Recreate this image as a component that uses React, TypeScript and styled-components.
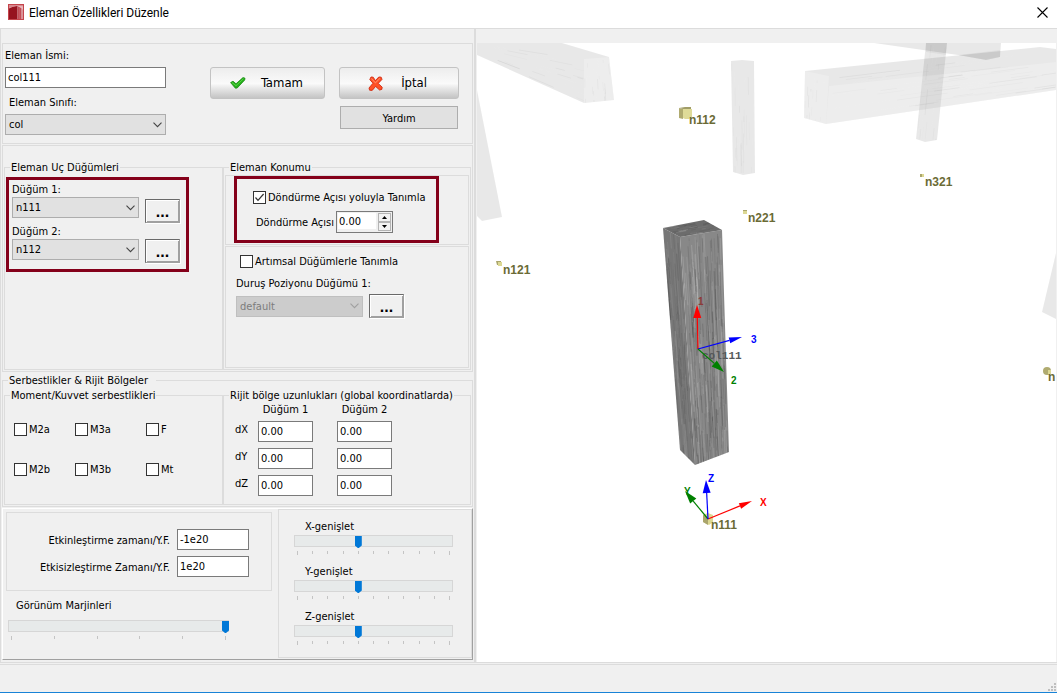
import React, { useId, useState } from "react";
import styled, { createGlobalStyle, css } from "styled-components";

const line = "#dcdcdc";
const face = "#f0f0f0";
const uiFont = '"DejaVu Sans Condensed", "DejaVu Sans", sans-serif';

const GlobalStyle = createGlobalStyle`
  *, *::before, *::after { box-sizing: border-box; }
  body { margin: 0; background: ${face}; }
  body, button, input, select { font: 11px/14px ${uiFont}; color: #000; }
  label, legend { padding-top: 2px; line-height: 12px; }
`;

/* ---------- window frame ---------- */

const Window = styled.div`
  min-height: 100vh;
  display: flex;
  flex-direction: column;
  background: ${face};
`;

const TitleBar = styled.header`
  display: flex;
  align-items: center;
  gap: 5px;
  height: 29px;
  padding: 0 9px 4px 8px;
  background: #fff;
  border-bottom: 1px solid ${line};
`;

const Title = styled.h1`
  flex: 1;
  margin: 0;
  padding-top: 2px;
  font: 400 12px/16px Roboto, sans-serif;
`;

const CloseButton = styled.button`
  display: flex;
  padding: 0;
  border: 0;
  background: none;
`;

const Body = styled.div`
  flex: 1;
  display: flex;
`;

const SidePanel = styled.form`
  flex: none;
  width: 476px;
  display: flex;
  flex-direction: column;
  gap: 1px;
  padding: 14px 1px 0;
  border-left: 1px solid ${line};
  border-right: 2px solid ${line};
`;

const StatusBar = styled.footer`
  display: flex;
  justify-content: flex-end;
  align-items: flex-end;
  height: 31px;
  padding: 0 1px 1px 0;
  border-top: 3px double ${line};
  border-bottom: 1px solid #1883d7;
`;

/* ---------- panels and groups ---------- */

const Panel = styled.section`
  border: 1px solid ${line};
`;

const Group = styled.fieldset`
  min-width: 0;
  margin: 0;
  padding: 0;
  border: 1px solid ${line};
`;

const GroupTitle = styled.legend<{ $wide?: boolean }>`
  margin-left: 5px;
  padding-left: 1px;
  padding-right: ${(p) => (p.$wide ? 8 : 1)}px;
  white-space: nowrap;
`;

const IdentityPanel = styled(Panel)`
  display: flex;
  gap: 44px;
  padding: 4px 2px 8px;
`;

const FieldStack = styled.div`
  width: 161px;
  display: flex;
  flex-direction: column;
`;

const FieldLabel = styled.label<{ $indent?: boolean; $spaced?: boolean }>`
  margin: ${(p) => (p.$spaced ? 7 : 0)}px 0 5px ${(p) => (p.$indent ? 4 : 0)}px;
`;

const Actions = styled.div`
  display: grid;
  grid-template-columns: 115px 120px;
  align-content: start;
  gap: 7px 14px;
  padding-top: 19px;
`;

const GlossButton = styled.button`
  height: 32px;
  display: flex;
  align-items: center;
  padding: 0 21px 0 19px;
  border: 1px solid #c3c3c3;
  border-radius: 3px;
  background: linear-gradient(#ededed 0%, #fafafa 52%, #f0f0f0 60%, #c4c4c4 100%);
  font-size: 13px;
`;

const ButtonText = styled.span`
  flex: 1;
  text-align: right;
`;

const CancelButton = styled(GlossButton)`
  padding: 0 31px 0 28px;
`;

const PlainButton = styled.button`
  grid-column: 2;
  height: 23px;
  margin: 0 1px;
  padding: 2px 0 0;
  border: 1px solid #adadad;
  background: #e1e1e1;
`;

const NodesPanel = styled(Panel)`
  display: grid;
  grid-template-columns: 219px 1fr;
  padding: 14px 1px 1px;
`;

const Highlight = styled.div`
  border: 3px solid #84001a;
`;

const NodeHighlight = styled(Highlight)`
  display: flex;
  gap: 6px;
  width: 183px;
  margin: 3px 0 0 1px;
  padding: 2px 6px 6px 3px;
`;

const NodeFields = styled.div`
  width: 127px;
  display: flex;
  flex-direction: column;
  gap: 1px;

  label + div + label {
    margin-top: 5px;
  }
`;

const BrowseColumn = styled.div`
  display: flex;
  flex-direction: column;
  gap: 16px;
  padding-top: 17px;
`;

const BrowseButton = styled.button`
  width: 35px;
  height: 24px;
  padding: 0;
  border: 1px solid;
  border-color: #696969 #a0a0a0 #a0a0a0 #696969;
  background: ${face};
  box-shadow: inset 1px 1px #fff, inset -1px -1px #a0a0a0, 1px 1px #fff;
  font: 700 16px/24px "Liberation Sans", sans-serif;
`;

const RotationPanel = styled(Panel)`
  margin: 1px;
  padding: 0 0 1px 8px;
`;

const RotationHighlight = styled(Highlight)`
  width: 205px;
  display: flex;
  flex-direction: column;
  gap: 7px;
  padding: 11px 0 7px 16px;
`;

const RotationRow = styled.div`
  display: flex;
  align-items: center;
  justify-content: space-between;
  padding: 0 43px 0 3px;
`;

const IncrementPanel = styled(Panel)`
  margin: 0 1px 1px;
  padding: 7px 0 49px 10px;
`;

const IncrementCheck = styled.div`
  padding-left: 4px;
  margin-bottom: 8px;
`;

const PositionLabel = styled.label`
  display: block;
`;

const PositionRow = styled.div`
  display: grid;
  grid-template-columns: 127px 35px;
  align-items: center;
  gap: 6px;
  margin-top: 4px;
`;

const ReleasesBody = styled.div`
  display: grid;
  grid-template-columns: 219px 1fr;
  padding: 1px;
`;

const CheckGrid = styled.div`
  display: grid;
  grid-template-columns: 61px 71px 1fr;
  row-gap: 26px;
  padding: 20px 0 28px 9px;
`;

const OffsetTable = styled.table`
  margin-left: 11px;
  border-collapse: collapse;

  th { padding: 0; font-weight: 400; }
  thead th { height: 19px; padding-top: 1px; vertical-align: top; }
  tbody th { width: 23px; height: 27px; padding-top: 2px; text-align: left; vertical-align: top; }
  td { width: 79px; padding: 0; vertical-align: top; }
  thead th:nth-child(n + 2) { padding-right: 24px; }
  td input { width: 55px; display: block; }
`;

const BottomPanel = styled.section`
  display: grid;
  grid-template-columns: 275px 1fr;
  border: 1px solid;
  border-color: #fff #a0a0a0 #a0a0a0 #fff;
`;

const TimePanel = styled(Panel)`
  display: grid;
  grid-template-columns: 163px 72px;
  align-items: center;
  gap: 6px 7px;
  margin: 3px 6px 0 3px;
  padding: 16px 0 13px;

  label { text-align: right; }
`;

const MarginBlock = styled.div`
  width: 221px;
  margin: 7px 0 0 5px;
`;

const ScalePanel = styled(Panel)`
  display: flex;
  flex-direction: column;
  gap: 9px;
  margin-bottom: 1px;
  padding: 9px 18px 12px 15px;
`;

/* ---------- controls ---------- */

const TextInput = styled.input`
  width: 100%;
  height: 21px;
  padding: 0 2px;
  border: 1px solid #7a7a7a;
  border-radius: 0;
  background: #fff;
  outline: 0;
`;

const Stacked = styled.div`
  display: grid;
  align-items: center;

  > * { grid-area: 1 / 1; }
  > svg { justify-self: end; margin-right: 4px; pointer-events: none; }
`;

const NativeSelect = styled.select`
  appearance: none;
  width: 100%;
  height: 21px;
  padding: 1px 20px 0 3px;
  border: 1px solid #adadad;
  border-radius: 0;
  background: #e1e1e1;

  &:disabled { border-color: #bfbfbf; background: #ccc; color: #7c7c7c; opacity: 1; }
`;

const CheckLabel = styled.label`
  display: flex;
  align-items: center;
  gap: 2px;
  width: fit-content;
  height: 14px;
  padding: 0;
  white-space: nowrap;
`;

const CheckText = styled.span`
  padding-top: 2px;
`;

const CheckBox = styled.span`
  display: grid;
  width: 13px;
  height: 13px;

  > * { grid-area: 1 / 1; }
  input { appearance: none; width: 13px; height: 13px; margin: 0; border: 1px solid #333; background: #fff; }
  svg { visibility: hidden; pointer-events: none; z-index: 1; }
  input:checked + svg { visibility: visible; }
`;

const Spinner = styled.div`
  display: flex;
  width: 57px;
  height: 22px;
  padding: 1px;
  border: 1px solid #7a7a7a;
  background: ${face};

  input { flex: 1; min-width: 0; height: 16px; padding: 0 1px; border: 0; background: #fff; outline: 0; }
`;

const SpinButtons = styled.div`
  display: grid;
  grid-template-rows: 1fr 1fr;
  width: 13px;
  margin-left: 2px;

  button { display: grid; place-items: center; min-height: 0; padding: 0; border: 1px solid #b4b4b4; background: #f2f2f2; }
`;

const thumb = css`
  appearance: none;
  width: 7px;
  height: 12px;
  margin-top: 2px;
  border: 0;
  border-radius: 0;
  background: #0078d7;
  clip-path: polygon(0 0, 100% 0, 100% 80%, 57% 100%, 43% 100%, 0 80%);
`;

const Range = styled.input`
  appearance: none;
  display: block;
  width: 100%;
  height: 12px;
  margin: 0;
  background: #e7eaea;
  box-shadow: inset 0 0 0 1px #d6d6d6;

  &::-webkit-slider-thumb { ${thumb} }
  &::-moz-range-thumb { ${thumb} }
`;

const Ticks = styled.div`
  display: flex;
  justify-content: space-between;
  height: 4px;
  margin-top: 4px;
  padding: 0 3px;

  i { width: 1px; height: 3px; background: #c4c4c4; }
  i:first-child, i:last-child { height: 4px; }
`;

const SliderLabel = styled.label<{ $gap: number; $indent: number }>`
  display: block;
  margin: 0 0 ${(p) => p.$gap}px ${(p) => p.$indent}px;
`;

function Select({ id, value, disabled }: { id: string; value: string; disabled?: boolean }) {
  return (
    <Stacked>
      <NativeSelect id={id} disabled={disabled} defaultValue={value}>
        <option>{value}</option>
      </NativeSelect>
      <svg width="9" height="6" viewBox="0 0 9 6">
        <path d="M.5 .7 4.5 4.7 8.5 .7" fill="none" stroke={disabled ? "#a0a0a0" : "#444"} strokeWidth="1.1" />
      </svg>
    </Stacked>
  );
}

function Check({ label, checked }: { label: string; checked?: boolean }) {
  return (
    <CheckLabel>
      <CheckBox>
        <input type="checkbox" defaultChecked={checked} />
        <svg width="13" height="13" viewBox="0 0 13 13">
          <path d="M2.5 6.5 5 9.3 10.6 3" fill="none" stroke="#333" strokeWidth="1.2" />
        </svg>
      </CheckBox>
      <CheckText>{label}</CheckText>
    </CheckLabel>
  );
}

interface SliderProps {
  label: string;
  steps: number;
  value: number;
  gap: number;
  indent: number;
}

function Slider({ label, steps, value, gap, indent }: SliderProps) {
  const id = useId();
  return (
    <div>
      <SliderLabel htmlFor={id} $gap={gap} $indent={indent}>{label}</SliderLabel>
      <Range id={id} type="range" min={0} max={steps} defaultValue={value} />
      <Ticks>
        {Array.from({ length: steps + 1 }, (_, i) => <i key={i} />)}
      </Ticks>
    </div>
  );
}

function AngleSpinner({ id }: { id: string }) {
  const [angle, setAngle] = useState(0);
  return (
    <Spinner>
      <input id={id} type="text" value={angle.toFixed(2)} onChange={(e) => setAngle(Number(e.target.value) || 0)} />
      <SpinButtons>
        <button type="button" aria-label="+" onClick={() => setAngle(angle + 1)}>
          <svg width="5" height="3" viewBox="0 0 5 3"><path d="M0 3h5L2.500 0z" /></svg>
        </button>
        <button type="button" aria-label="-" onClick={() => setAngle(angle - 1)}>
          <svg width="5" height="3" viewBox="0 0 5 3"><path d="M0 0h5L2.500 3z" /></svg>
        </button>
      </SpinButtons>
    </Spinner>
  );
}

/* ---------- 3D model view ---------- */

const ViewPane = styled.main`
  flex: 1;
  min-width: 0;
  display: flex;
  padding: 14px 1px 0;
`;

const Scene = styled.svg`
  flex: 1;
  min-width: 0;
  min-height: 618px;
  background: #fff;

  text { font: 700 12px "Liberation Sans", sans-serif; fill: #6b6b35; }
  .axis { font-size: 10px; }
  .member { font: 700 11px "Liberation Mono", monospace; fill: #55585a; }
  .axis-x { fill: #f00; }
  .axis-y { fill: #008000; }
  .axis-z { fill: #00f; }
  .behind { fill: #8b3a3a; }
`;

type Point = [number, number];
type Quad = [Point, Point, Point, Point];

const mix = (a: Point, b: Point, t: number): Point => [a[0] + (b[0] - a[0]) * t, a[1] + (b[1] - a[1]) * t];

/** Wood streaks that run from edge q0-q1 to edge q3-q2 of a face. */
function Grain({ quad, count, seed, strength }: { quad: Quad; count: number; seed: number; strength: number }) {
  let s = seed;
  const next = () => {
    s = (s * 16807) % 2147483647;
    return s / 2147483647;
  };
  const streaks = Array.from({ length: count }, (_, i) => {
    const u = 0.03 + next() * 0.94;
    const from = next();
    const to = Math.min(1, from + 0.05 + next() * 0.22);
    const start = mix(quad[0], quad[1], u);
    const end = mix(quad[3], quad[2], u);
    const [x1, y1] = mix(start, end, from);
    const [x2, y2] = mix(start, end, to);
    const dark = next() > 0.45;
    return (
      <line key={i} x1={x1} y1={y1} x2={x2} y2={y2} stroke={dark ? "#000" : "#fff"} strokeOpacity={(0.3 + next() * 0.7) * strength} />
    );
  });
  return <g>{streaks}</g>;
}

const points = (list: Point[]) => list.map((p) => p.join(",")).join(" ");

const columnLeft: Quad = [[663, 228], [680, 237], [695, 465], [680, 450]];
const columnFront: Quad = [[680, 237], [722, 230], [729, 452], [695, 465]];
const columnTop: Quad = [[663, 228], [704, 220], [722, 230], [680, 237]];

function Arrow({ from, to, color, width = 4 }: { from: Point; to: Point; color: string; width?: number }) {
  const length = Math.hypot(to[0] - from[0], to[1] - from[1]);
  const ux = (to[0] - from[0]) / length;
  const uy = (to[1] - from[1]) / length;
  const base: Point = [to[0] - ux * 13, to[1] - uy * 13];
  const head: Point[] = [to, [base[0] - uy * width, base[1] + ux * width], [base[0] + uy * width, base[1] - ux * width]];
  return (
    <g fill={color} stroke={color}>
      <line x1={from[0]} y1={from[1]} x2={base[0]} y2={base[1]} strokeWidth="1.2" />
      <polygon points={points(head)} stroke="none" />
    </g>
  );
}

function ModelScene() {
  return (
    <Scene viewBox="477 43 579 619" preserveAspectRatio="xMidYMid slice" role="img" aria-label="Model">
      <g fill="#000" fillOpacity=".09">
        <polygon points="477,43 562,43 609,57 614,100 584,103 477,55" />
        <polygon points="477,90 502,217 482,221 477,216" />
        <polygon points="731,61 742,60 754,61 755,173 743,175 733,172" />
        <polygon points="805,71 1040,47 1056,49 1056,90 826,124 804,118" />
        <polygon points="926,43 947,43 937,140 925,142 916,139" />
        <polygon points="874,43 1001,43 1000,57 986,60 958,55" />
        <polygon points="1056,253 1042,312 1056,319" />
      </g>
      <g fill="#fff" fillOpacity=".22">
        <polygon points="584,59 609,57 614,100 584,103" />
        <polygon points="805,71 829,76 826,124 804,118" />
        <polygon points="829,86 1056,62 1056,90 826,124" />
      </g>
      <path d="M926 43h21l-1 12-20-3zM958 55l42-5v7l-14 3z" fillOpacity=".04" />
      <Grain quad={[[477, 43], [477, 55], [584, 103], [584, 59]]} count={34} seed={41} strength={0.04} />
      <Grain quad={[[584, 59], [609, 57], [614, 100], [584, 103]]} count={26} seed={87} strength={0.04} />
      <Grain quad={[[829, 76], [826, 124], [1056, 90], [1056, 49]]} count={70} seed={53} strength={0.04} />
      <Grain quad={[[805, 71], [829, 76], [826, 124], [804, 118]]} count={20} seed={29} strength={0.04} />
      <Grain quad={[[731, 61], [754, 61], [755, 173], [733, 173]]} count={34} seed={61} strength={0.03} />
      <Grain quad={[[926, 43], [947, 43], [937, 140], [916, 139]]} count={26} seed={19} strength={0.03} />

      <polygon points={points(columnLeft)} fill="#777" />
      <polygon points={points(columnFront)} fill="#888" />
      <polygon points={points(columnTop)} fill="#6c6c6c" />
      <Grain quad={columnLeft} count={90} seed={1234} strength={0.1} />
      <Grain quad={columnFront} count={220} seed={777} strength={0.17} />
      <Grain quad={[columnTop[0], columnTop[3], columnTop[2], columnTop[1]]} count={36} seed={99} strength={0.12} />

      <text x="698" y="305" className="axis behind">1</text>
      <text x="702" y="359" className="member">col111</text>
      <Arrow from={[698, 349]} to={[697, 305]} color="#f00" />
      <Arrow from={[698, 349]} to={[742, 337]} color="#00f" width={3} />
      <Arrow from={[698, 349]} to={[724, 372]} color="#008000" />
      <text x="751" y="343" className="axis axis-z">3</text>
      <text x="731" y="384" className="axis axis-y">2</text>

      <path d="M703 515l5-2 5 2v7l-4 3-6-3z" fill="#dcd893" />
      <path d="M703 515l5 2v8l-5-3z" fill="#aaa56c" />
      <Arrow from={[708, 519]} to={[752, 501]} color="#f00" width={3} />
      <Arrow from={[708, 519]} to={[685, 491]} color="#008000" />
      <Arrow from={[708, 519]} to={[706, 480]} color="#00f" />
      <text x="684" y="495" className="axis axis-y">Y</text>
      <text x="708" y="482" className="axis axis-z">Z</text>
      <text x="760" y="506" className="axis axis-x">X</text>
      <text x="711" y="529">n111</text>

      <path d="M679 108l4 1v10l-4-1z" fill="#b0ab70" />
      <path d="M679 108l6-1h6v2h-8z" fill="#a19d68" />
      <path d="M683 109h9v8l-3 2h-4l-2-1z" fill="#dfdb98" />
      <text x="689" y="124">n112</text>
      <path d="M496 261h5v1h-3v3h-1z" fill="#aaa56c" />
      <path d="M498 262h4v4h-4z" fill="#dcd893" />
      <text x="503" y="274">n121</text>
      <path d="M743 210h4v1h-4z" fill="#aaa56c" />
      <path d="M743 211h4v3h-4z" fill="#dcd893" />
      <text x="748" y="222">n221</text>
      <path d="M920 174h2v3h-2z" fill="#aaa56c" />
      <path d="M922 174h2v3h-2z" fill="#dcd893" />
      <text x="925" y="186">n321</text>
      <circle cx="1047" cy="371" r="4" fill="#b0ab70" />
      <path d="M1048 370h3v4h-3z" fill="#dcd893" />
      <text x="1048" y="381">n</text>
    </Scene>
  );
}

/* ---------- icons ---------- */

const AppIcon = () => (
  <svg width="16" height="16" viewBox="0 0 16 16">
    <rect width="16" height="16" fill="#c4444b" />
    <path d="M1 1h14v14H1z" fill="#e9b9bd" />
    <path d="M1 4.500l4-2 4.500-.5v13H1z" fill="#96131f" />
    <path d="M10.200 2.500l1.500 .8V15h-1.500z" fill="#b8323d" />
    <path d="M12.200 3.500l1.100 .8V15h-1.100z" fill="#b8323d" />
    <path d="M13.900 5l.6 .8V15h-.6z" fill="#cf7079" />
    <path d="M1 1h14v1.200L9 1.800 1 4z" fill="#d9888e" />
  </svg>
);

const OkIcon = () => (
  <svg width="16" height="12" viewBox="0 0 16 12">
    <path d="M.6 5.600 3 4.200l3 2.600L13 .6l2 .6-.3 1.800L7.200 11 5.400 11.200z" fill="#27b01c" stroke="#178a12" strokeWidth=".8" />
    <path d="M2 5.500l4 3.200L13.500 1.700" fill="none" stroke="#5fdc4c" strokeWidth=".8" />
  </svg>
);

const CancelIcon = () => (
  <svg width="15" height="15" viewBox="0 0 15 15">
    <path d="M3 1 1.800 3.600 5 7.200 1 12l.6 2.200 2.600.2 3.400-4 4 3.600 2.200-.6.4-2.200-4-3.800L14 3.400 13.200 1.200 10.800 1 7.400 4.600 5.200 1.200z" fill="#ff5126" stroke="#d02a12" strokeWidth=".9" />
    <path d="M3.400 2.500l4 4.400 4.600-4.600" fill="none" stroke="#ff9a78" strokeWidth=".9" />
  </svg>
);

const CloseIcon = () => (
  <svg width="11" height="11" viewBox="0 0 11 11">
    <path d="M.5 .5l10 10M10.500 .5l-10 10" stroke="#000" strokeWidth="1.100" />
  </svg>
);

const SizeGrip = () => (
  <svg width="8" height="8" viewBox="0 0 8 8" fill="#bfbfbf">
    <path d="M6 0h2v2H6zM3 3h2v2H3zM6 3h2v2H6zM0 6h2v2H0zM3 6h2v2H3zM6 6h2v2H6z" />
  </svg>
);

/* ---------- dialog ---------- */

const releases = ["M2a", "M3a", "F", "M2b", "M3b", "Mt"];
const offsets = ["dX", "dY", "dZ"];
const scales = ["X-genişlet", "Y-genişlet", "Z-genişlet"];

export default function App() {
  return (
    <Window>
      <GlobalStyle />
      <TitleBar>
        <AppIcon />
        <Title>Eleman Özellikleri Düzenle</Title>
        <CloseButton type="button" aria-label="Kapat"><CloseIcon /></CloseButton>
      </TitleBar>

      <Body>
        <SidePanel onSubmit={(e) => e.preventDefault()}>
          <IdentityPanel>
            <FieldStack>
              <FieldLabel htmlFor="name">Eleman İsmi:</FieldLabel>
              <TextInput id="name" defaultValue="col111" />
              <FieldLabel htmlFor="class" $indent $spaced>Eleman Sınıfı:</FieldLabel>
              <Select id="class" value="col" />
            </FieldStack>
            <Actions>
              <GlossButton type="submit"><OkIcon /><ButtonText>Tamam</ButtonText></GlossButton>
              <CancelButton type="button"><CancelIcon /><ButtonText>İptal</ButtonText></CancelButton>
              <PlainButton type="button">Yardım</PlainButton>
            </Actions>
          </IdentityPanel>

          <NodesPanel>
            <Group>
              <GroupTitle>Eleman Uç Düğümleri</GroupTitle>
              <NodeHighlight>
                <NodeFields>
                  <label htmlFor="node1">Düğüm 1:</label>
                  <Select id="node1" value="n111" />
                  <label htmlFor="node2">Düğüm 2:</label>
                  <Select id="node2" value="n112" />
                </NodeFields>
                <BrowseColumn>
                  <BrowseButton type="button">...</BrowseButton>
                  <BrowseButton type="button">...</BrowseButton>
                </BrowseColumn>
              </NodeHighlight>
            </Group>

            <Group>
              <GroupTitle>Eleman Konumu</GroupTitle>
              <RotationPanel>
                <RotationHighlight>
                  <Check label="Döndürme Açısı yoluyla Tanımla" checked />
                  <RotationRow>
                    <label htmlFor="angle">Döndürme Açısı</label>
                    <AngleSpinner id="angle" />
                  </RotationRow>
                </RotationHighlight>
              </RotationPanel>
              <IncrementPanel>
                <IncrementCheck><Check label="Artımsal Düğümlerle Tanımla" /></IncrementCheck>
                <PositionLabel htmlFor="position">Duruş Poziyonu Düğümü 1:</PositionLabel>
                <PositionRow>
                  <Select id="position" value="default" disabled />
                  <BrowseButton type="button">...</BrowseButton>
                </PositionRow>
              </IncrementPanel>
            </Group>
          </NodesPanel>

          <Group>
            <GroupTitle $wide>Serbestlikler &amp; Rijit Bölgeler</GroupTitle>
            <ReleasesBody>
              <Group>
                <GroupTitle>Moment/Kuvvet serbestlikleri</GroupTitle>
                <CheckGrid>
                  {releases.map((name) => <Check key={name} label={name} />)}
                </CheckGrid>
              </Group>
              <Group>
                <GroupTitle>Rijit bölge uzunlukları (global koordinatlarda)</GroupTitle>
                <OffsetTable>
                  <thead>
                    <tr><th /><th scope="col">Düğüm 1</th><th scope="col">Düğüm 2</th></tr>
                  </thead>
                  <tbody>
                    {offsets.map((axis) => (
                      <tr key={axis}>
                        <th scope="row">{axis}</th>
                        <td><TextInput aria-label={`${axis} Düğüm 1`} defaultValue="0.00" /></td>
                        <td><TextInput aria-label={`${axis} Düğüm 2`} defaultValue="0.00" /></td>
                      </tr>
                    ))}
                  </tbody>
                </OffsetTable>
              </Group>
            </ReleasesBody>
          </Group>

          <BottomPanel>
            <div>
              <TimePanel>
                <label htmlFor="activation">Etkinleştirme zamanı/Y.F.</label>
                <TextInput id="activation" defaultValue="-1e20" />
                <label htmlFor="deactivation">Etkisizleştirme Zamanı/Y.F.</label>
                <TextInput id="deactivation" defaultValue="1e20" />
              </TimePanel>
              <MarginBlock>
                <Slider label="Görünüm Marjinleri" steps={5} value={5} gap={8} indent={8} />
              </MarginBlock>
            </div>
            <ScalePanel>
              {scales.map((label) => (
                <Slider key={label} label={label} steps={10} value={4} gap={2} indent={11} />
              ))}
            </ScalePanel>
          </BottomPanel>
        </SidePanel>

        <ViewPane><ModelScene /></ViewPane>
      </Body>

      <StatusBar><SizeGrip /></StatusBar>
    </Window>
  );
}
